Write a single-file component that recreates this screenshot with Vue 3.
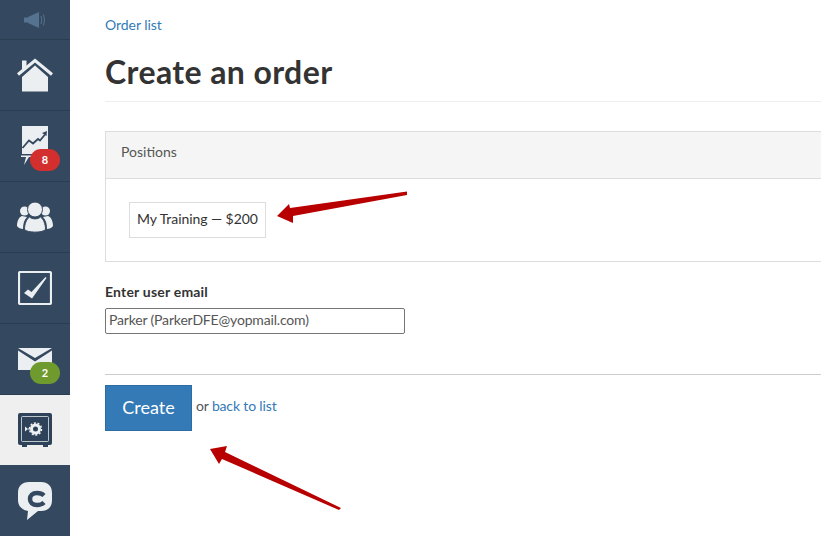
<template>
  <div class="page">
    <aside class="sidebar">
      <div class="nav-top">
        <svg width="22" height="16" viewBox="0 0 22 16" fill="#557290">
          <rect x="0" y="5.500" width="4" height="5" />
          <path d="M4 5 15 0V16L4 11Z" />
          <path d="M17 4q1.500 4 0 8M19.500 2.500q2 5.500 0 11" fill="none" stroke="#557290" />
        </svg>
      </div>
      <a class="nav-item">
        <svg width="36" height="35" viewBox="0 0 36 35">
          <path d="M5 2.500h4.500V11H5z" fill="#eceff1" />
          <path d="M1 16.500 18 2.500 35 16.500" fill="none" stroke="#eceff1" stroke-width="3" />
          <path d="M5 19 18 7.500 31 19V33.500H5z" fill="#eceff1" />
        </svg>
      </a>
      <a class="nav-item">
        <svg width="28" height="40" viewBox="0 0 28 40">
          <path d="M1 0h26v28H1z" fill="#eceff1" />
          <path d="M1.500 22 8 14.500l4 3 5-4.500 2 1.500 5-6" fill="none" stroke="#34495f" stroke-width="1.800" />
          <path d="M21 7l5-2-.5 5z" fill="#34495f" />
          <path d="M0 29.500h14V31H8L3 39l2-8H0z" fill="#eceff1" />
        </svg>
        <span class="badge red">8</span>
      </a>
      <a class="nav-item">
        <svg width="36" height="31" viewBox="0 0 36 31" fill="#eceff1">
          <circle cx="7.500" cy="9" r="4.500" />
          <circle cx="28.500" cy="9" r="4.500" />
          <path d="M5 14c-3 1-5 5-5 10 1 2 4 3 6 3 0-5 1-9 4-12z" />
          <path d="M31 14c3 1 5 5 5 10-1 2-4 3-6 3 0-5-1-9-4-12z" />
          <circle cx="18" cy="7.500" r="7.500" stroke="#34495f" />
          <path d="M12.500 15c-3 2-5 7-5 12.500 3 3.500 18 3.500 21 0 0-5.500-2-10.500-5-12.500-3 2.500-8 2.500-11 0z" stroke="#34495f" />
        </svg>
      </a>
      <a class="nav-item">
        <svg width="34" height="34" viewBox="0 0 34 34">
          <rect x="1" y="1" width="32" height="32" rx="1.500" fill="none" stroke="#eceff1" stroke-width="2.200" />
          <path d="M6 22l4-3.500 3.500 2.500L27.500 6l1 1L14 27.500z" fill="#eceff1" />
        </svg>
      </a>
      <a class="nav-item">
        <svg class="mail" width="34" height="22" viewBox="0 0 34 22">
          <path d="M0 0h34L17 10z" fill="#eceff1" />
          <path d="M0 2.500l17 11 17-11V22H0z" fill="#eceff1" />
        </svg>
        <span class="badge green">2</span>
      </a>
      <a class="nav-item active">
        <svg width="34" height="34" viewBox="0 0 34 34">
          <path d="M2 0h30a2 2 0 0 1 2 2v28a2 2 0 0 1-2 2h-2v2h-5v-2H9v2H4v-2H2a2 2 0 0 1-2-2V2a2 2 0 0 1 2-2z" fill="#2e4259" />
          <rect x="3.500" y="3.500" width="27" height="25" rx="1" fill="none" stroke="#eef1f3" stroke-opacity="0.75" />
          <circle cx="17.500" cy="16" r="4" fill="none" stroke="#eef1f3" stroke-width="3" />
          <circle cx="17.500" cy="16" r="6" fill="none" stroke="#eef1f3" stroke-width="1.500" stroke-dasharray="2 1.700" />
          <path d="M7 13.500l3 2.500-3 2.500z" fill="#eef1f3" />
          <path d="M10 16h2" stroke="#eef1f3" />
        </svg>
      </a>
      <a class="nav-item chat">
        <svg width="34" height="38" viewBox="0 0 34 38">
          <path d="M11 0h12c7 0 11 4 11 11v7c0 7-4 11-11 11h-3l-11 9 1-9c-6-1-10-5-10-11v-7C0 4 4 0 11 0z" fill="#eceff1" />
          <path d="M26 13.500c-1.500-1.500-4-2.500-7-2.500-4.500 0-7 2.500-7 6s2.500 6 7 6c3 0 5.500-1 7-2.500" fill="none" stroke="#34495f" stroke-width="4.500" />
        </svg>
      </a>
    </aside>

    <main class="content">
      <a class="crumb">Order list</a>
      <h1 class="title">Create an order</h1>

      <section class="panel">
        <div class="panel-head">Positions</div>
        <div class="panel-body">
          <span class="position">My Training — $200</span>
        </div>
      </section>

      <label class="field-label">Enter user email</label>
      <input class="field" type="text" value="Parker (ParkerDFE@yopmail.com)" />

      <div class="actions">
        <button class="create" type="button">Create</button>
        <span class="alt">or <a>back to list</a></span>
      </div>
    </main>

    <svg class="arrows" width="821" height="536" viewBox="0 0 821 536">
      <path d="M407 191.500 290 208l-1-4-12 12 16 7v-7l114-21z" fill="#b80000" />
      <path d="M341 508 225 452l2-6-17 3 9 15 3-5 117 51z" fill="#b80000" />
    </svg>
  </div>
</template>

<script setup>
</script>

<style scoped>
.page {
  position: relative;
  display: flex;
  width: 821px;
  height: 536px;
  overflow: hidden;
  background: #fff;
  font-family: Lato, "Liberation Sans", sans-serif;
  color: #333;
}

.sidebar {
  flex: none;
  display: flex;
  flex-direction: column;
  width: 70px;
  height: 536px;
  overflow: hidden;
  background: #34495f;
}

.nav-top {
  flex: none;
  display: flex;
  align-items: center;
  justify-content: center;
  height: 39px;
  padding-right: 1px;
  border-bottom: 1px solid #2b3d50;
}

.nav-item {
  position: relative;
  flex: none;
  display: flex;
  align-items: center;
  justify-content: center;
  height: 70px;
  border-bottom: 1px solid #2b3d50;
}

.nav-item.active {
  background: #efefef;
  border-bottom-color: #34495f;
}

.nav-item.chat {
  border-bottom: 0;
}

.mail {
  margin-top: -1px;
}

.badge {
  position: absolute;
  left: 30px;
  bottom: 10px;
  width: 30px;
  height: 22px;
  border-radius: 11px;
  font-size: 11px;
  font-weight: 700;
  line-height: 22px;
  text-align: center;
  color: #fff;
}

.badge.red {
  background: #d32f2f;
}

.badge.green {
  background: #6f9a2e;
}

.content {
  flex: none;
  display: flex;
  flex-direction: column;
  align-items: flex-start;
  width: 726px;
  margin-left: 35px;
  font-size: 14px;
}

.crumb {
  margin-top: 16px;
  font-size: 14px;
  line-height: 17px;
  letter-spacing: -0.05px;
  color: #337ab7;
}

.title {
  align-self: stretch;
  margin: 20px 0 29px;
  padding-bottom: 10px;
  border-bottom: 1px solid #eee;
  font-size: 32px;
  font-weight: 700;
  line-height: 38px;
  letter-spacing: 0.4px;
  color: #333;
}

.panel {
  align-self: stretch;
  border: 1px solid #ddd;
}

.panel-head {
  height: 46px;
  padding-left: 15px;
  border-bottom: 1px solid #ddd;
  background: #f5f5f5;
  line-height: 39px;
  color: #555;
}

.panel-body {
  display: flex;
  align-items: flex-start;
  height: 82px;
  padding: 23px 0 0 23px;
  box-sizing: border-box;
}

.position {
  height: 36px;
  padding: 0 7px;
  border: 1px solid #ddd;
  box-sizing: border-box;
  line-height: 32px;
  letter-spacing: -0.06px;
  color: #333;
}

.field-label {
  margin-top: 21px;
  font-weight: 700;
  line-height: 17px;
  letter-spacing: 0.2px;
}

.field {
  width: 300px;
  height: 26px;
  margin-top: 8px;
  padding: 0 3px 3px;
  border: 1px solid #767676;
  border-radius: 2px;
  box-sizing: border-box;
  font: 14px Lato, "Liberation Sans", sans-serif;
  letter-spacing: -0.17px;
  color: #555;
}

.actions {
  align-self: stretch;
  display: flex;
  align-items: flex-start;
  gap: 4px;
  margin-top: 40px;
  padding-top: 10px;
  border-top: 1px solid #ccc;
}

.create {
  width: 87px;
  height: 46px;
  padding: 0 0 2px;
  border: 1px solid #2e6da4;
  background: #337ab7;
  font: 18px Lato, "Liberation Sans", sans-serif;
  color: #fff;
}

.alt {
  margin-top: 11px;
  line-height: 20px;
  letter-spacing: -0.15px;
  color: #555;
}

.alt a {
  color: #337ab7;
}

.arrows {
  position: absolute;
  left: 0;
  top: 0;
  pointer-events: none;
}
</style>
